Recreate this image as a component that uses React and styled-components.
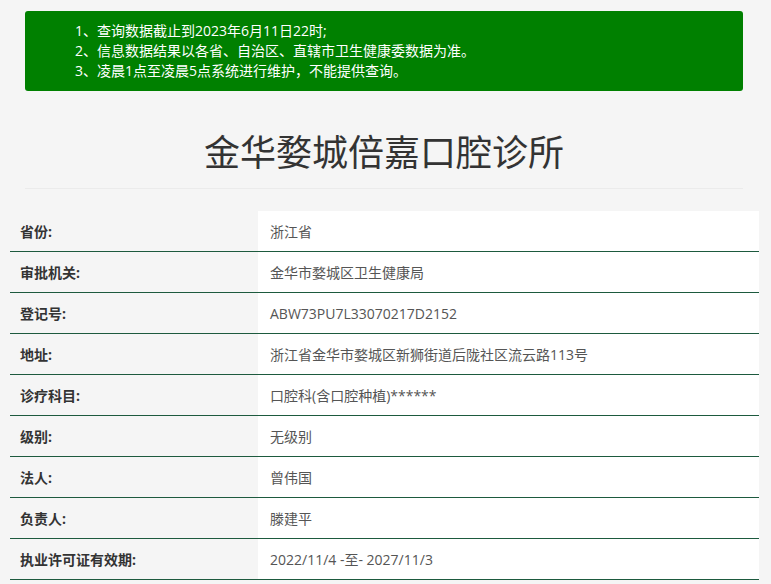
import React from "react";
import styled, { createGlobalStyle } from "styled-components";

const Global = createGlobalStyle`
  html, body { margin: 0; padding: 0; background: #f5f5f5; }
  body { font-family: "Open Sans", "Noto Sans CJK SC", sans-serif; color: #333; }
`;

const Page = styled.div`
  padding: 11px 0 0;
`;

const Notice = styled.div`
  margin: 0 28px 0 25px;
  background: #008000;
  border-radius: 3px;
  padding: 10px 0 10px 50px;
  color: #fff;
  font-size: 14px;
  line-height: 20px;
`;

const Title = styled.h1`
  margin: 42px 28px 0 25px;
  padding-bottom: 15px;
  border-bottom: 1px solid #ebebeb;
  text-align: center;
  font-weight: 400;
  font-size: 36px;
  line-height: 40px;
  color: #333;
`;

const Table = styled.div`
  margin: 22px 12px 0 10px;
  display: grid;
  grid-template-columns: 248px 1fr;
`;

const Label = styled.div`
  height: 40px;
  display: flex;
  align-items: center;
  padding-left: 10px;
  font-size: 14px;
  font-weight: 700;
  color: #333;
  border-bottom: 1px solid #1d5a3e;
`;

const Value = styled.div`
  height: 40px;
  display: flex;
  align-items: center;
  padding-left: 12px;
  font-size: 14px;
  color: #555;
  background: #fff;
  border-bottom: 1px solid #1d5a3e;
`;

const rows = [
  ["省份:", "浙江省"],
  ["审批机关:", "金华市婺城区卫生健康局"],
  ["登记号:", "ABW73PU7L33070217D2152"],
  ["地址:", "浙江省金华市婺城区新狮街道后陇社区流云路113号"],
  ["诊疗科目:", "口腔科(含口腔种植)******"],
  ["级别:", "无级别"],
  ["法人:", "曾伟国"],
  ["负责人:", "滕建平"],
  ["执业许可证有效期:", "2022/11/4 -至- 2027/11/3"],
];

export default function App() {
  return (
    <Page>
      <Global />
      <Notice>
        <div>1、查询数据截止到2023年6月11日22时;</div>
        <div>2、信息数据结果以各省、自治区、直辖市卫生健康委数据为准。</div>
        <div>3、凌晨1点至凌晨5点系统进行维护，不能提供查询。</div>
      </Notice>
      <Title>金华婺城倍嘉口腔诊所</Title>
      <Table>
        {rows.map(([l, v]) => (
          <React.Fragment key={l}>
            <Label>{l}</Label>
            <Value>{v}</Value>
          </React.Fragment>
        ))}
      </Table>
    </Page>
  );
}
